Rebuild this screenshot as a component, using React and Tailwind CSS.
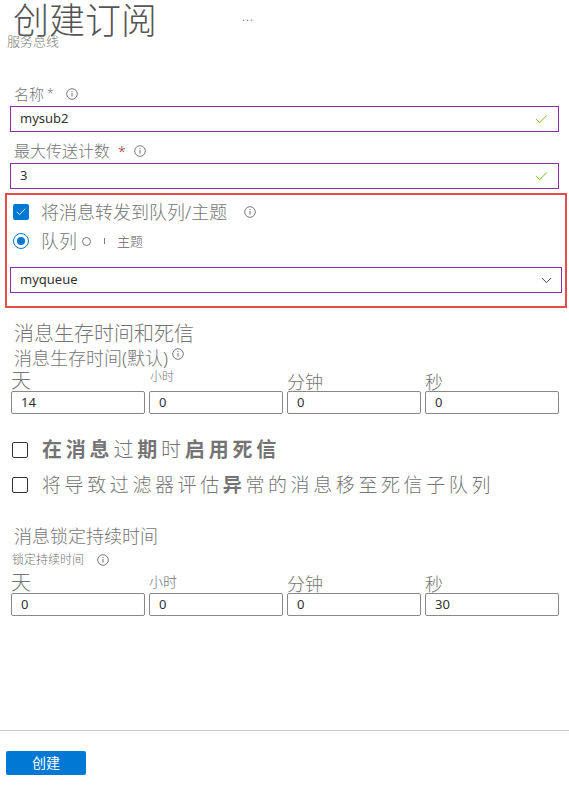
import React from 'react';
import { ChevronDown, Check } from 'lucide-react';

const FONT = { fontFamily: '"Noto Sans", "Noto Sans CJK SC", sans-serif' };

function InfoIcon({ className = '' }) {
  return (
    <svg width="12" height="12" viewBox="0 0 12 12" className={className}>
      <circle cx="6" cy="6" r="5.3" fill="none" stroke="#6b6b6b" strokeWidth="0.9" />
      <rect x="5.5" y="5" width="1" height="3.6" fill="#6b6b6b" />
      <rect x="5.5" y="3" width="1" height="1" fill="#6b6b6b" />
    </svg>
  );
}

function TextField({ value, valid }) {
  return (
    <div className="flex h-[26px] items-center justify-between border border-[#8b2fa8] px-[9px] mx-[10px] text-[13px] text-[#323130]">
      <span>{value}</span>
      {valid && <Check size={15} strokeWidth={1.5} className="text-[#6bb700]" />}
    </div>
  );
}

function TimeRow({ labels, values }) {
  return (
    <div className="grid grid-cols-4 gap-x-[4px] pl-[11px] w-[559px]">
      {labels.map((l, i) => (
        <div key={i} className="flex flex-col">
          <div className={`h-[22px] flex items-end text-[#747474] font-light leading-none ${l.cls}`}>
            {l.text}
          </div>
          <div className="h-[23px] border border-[#8a8886] rounded-[2px] flex items-center px-[9px] text-[13px] text-[#323130]">
            {values[i]}
          </div>
        </div>
      ))}
    </div>
  );
}

export default function App() {
  return (
    <div className="w-[569px] h-[785px] bg-white relative overflow-hidden" style={FONT}>
      {/* header */}
      <div className="flex items-start pt-[3px] pl-[13px]">
        <h1 className="text-[36px] leading-[36px] text-[#555] font-light">创建订阅</h1>
        <span className="ml-[85px] mt-[6px] text-[11px] text-[#777] tracking-[1px]">...</span>
      </div>
      <div className="-mt-[5px] pl-[7px] text-[13px] leading-[14px] text-[#777] font-light">服务总线</div>

      {/* name */}
      <div className="mt-[36px] pl-[14px] flex items-center h-[20px] text-[15px] text-[#747474] font-light">
        <span>名称</span>
        <span className="ml-[3px] text-[12px]">*</span>
        <InfoIcon className="ml-[12px]" />
      </div>
      <div className="mt-[2px]">
        <TextField value="mysub2" valid />
      </div>

      {/* max delivery */}
      <div className="mt-[8px] pl-[14px] flex items-center h-[22px] text-[16px] text-[#747474] font-light">
        <span>最大传送计数</span>
        <span className="ml-[8px] text-[14px] text-[#a4262c]">*</span>
        <InfoIcon className="ml-[8px]" />
      </div>
      <div className="mt-[1px]">
        <TextField value="3" valid />
      </div>

      {/* forward box */}
      <div className="mt-[4px] mx-[5px] w-[562px] border-2 border-[#e74c47] pt-[7px] pb-[13px]">
        <div className="flex items-center h-[20px] pl-[6px]">
          <span className="w-[16px] h-[16px] rounded-[2px] bg-[#0078d4] flex items-center justify-center">
            <Check size={12} strokeWidth={1.6} className="text-white" />
          </span>
          <span className="ml-[12px] text-[18px] leading-none text-[#747474] font-light">将消息转发到队列/主题</span>
          <InfoIcon className="ml-[17px]" />
        </div>
        <div className="mt-[9px] flex items-center h-[20px] pl-[6px]">
          <span className="w-[16px] h-[16px] rounded-full border border-[#0078d4] flex items-center justify-center">
            <span className="w-[8px] h-[8px] rounded-full bg-[#0078d4]" />
          </span>
          <span className="ml-[12px] text-[18px] leading-none text-[#747474] font-light">队列</span>
          <span className="ml-[5px] w-[9px] h-[9px] rounded-full border border-[#777]" />
          <span className="ml-[13px] w-[1px] h-[6px] bg-[#777]" />
          <span className="ml-[12px] text-[13px] leading-none text-[#666] font-light">主题</span>
        </div>
        <div className="mt-[16px] mx-[3px] h-[26px] border border-[#8b2fa8] flex items-center justify-between pl-[9px] pr-[6px] text-[13px] text-[#323130]">
          <span>myqueue</span>
          <ChevronDown size={17} strokeWidth={1.3} className="text-[#323130]" />
        </div>
      </div>

      {/* message ttl */}
      <div className="mt-[14px] pl-[14px] text-[20px] leading-[24px] text-[#747474] font-light">消息生存时间和死信</div>
      <div className="mt-[1px] pl-[14px] flex items-start h-[22px] text-[18px] leading-[22px] text-[#747474] font-light">
        <span>消息生存时间(默认)</span>
        <InfoIcon className="ml-[4px] mt-[1px]" />
      </div>
      <TimeRow
        labels={[
          { text: '天', cls: 'text-[20px]' },
          { text: '小时', cls: 'text-[12px] pb-[8px] pl-[1px]' },
          { text: '分钟', cls: 'text-[18px]' },
          { text: '秒', cls: 'text-[18px]' },
        ]}
        values={['14', '0', '0', '0']}
      />

      {/* dead letter checkboxes */}
      <div className="mt-[25px] pl-[12px] flex items-center h-[22px]">
        <span className="w-[16px] h-[16px] border border-[#323130] rounded-[2px]" />
        <span className="ml-[14px] text-[20px] leading-none tracking-[3.8px] text-[#747474] font-light">
          <b className="font-semibold">在消息</b>过<b className="font-semibold">期</b>时<b className="font-semibold">启用死信</b>
        </span>
      </div>
      <div className="mt-[13px] pl-[12px] flex items-center h-[22px]">
        <span className="w-[16px] h-[16px] border border-[#323130] rounded-[2px]" />
        <span className="ml-[14px] text-[19px] leading-none tracking-[3.6px] text-[#747474] font-light">
          将导致过滤器评估<b className="font-semibold">异</b>常的消息移至死信子队列
        </span>
      </div>

      {/* lock duration */}
      <div className="mt-[29px] pl-[14px] text-[18px] leading-[22px] text-[#747474] font-light">消息锁定持续时间</div>
      <div className="mt-[5px] pl-[12px] flex items-center h-[16px] text-[12px] text-[#747474] font-light">
        <span>锁定持续时间</span>
        <InfoIcon className="ml-[13px]" />
      </div>
      <div className="mt-[3px]">
        <TimeRow
          labels={[
            { text: '天', cls: 'text-[20px]' },
            { text: '小时', cls: 'text-[14px] pb-[4px]' },
            { text: '分钟', cls: 'text-[18px]' },
            { text: '秒', cls: 'text-[18px]' },
          ]}
          values={['0', '0', '0', '30']}
        />
      </div>

      {/* footer */}
      <div className="absolute left-0 right-0 top-[730px] h-[1px] bg-[#c8c6c4]" />
      <button className="absolute left-[6px] top-[751px] w-[80px] h-[24px] bg-[#0078d4] rounded-[2px] text-white text-[14px] leading-none">
        创建
      </button>
    </div>
  );
}
